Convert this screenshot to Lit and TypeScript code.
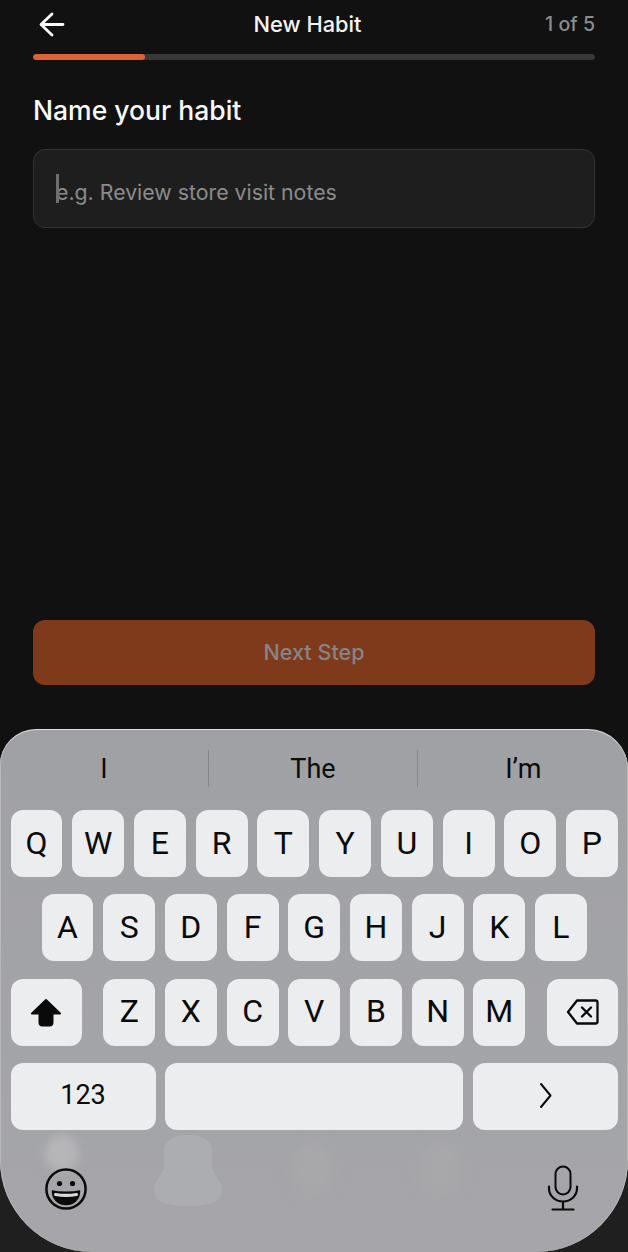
import { LitElement, html, css, svg } from "lit";
import { customElement } from "lit/decorators.js";

const row1 = ["Q","W","E","R","T","Y","U","I","O","P"];
const row2 = ["A","S","D","F","G","H","J","K","L"];
const row3 = ["Z","X","C","V","B","N","M"];

@customElement("app-root")
export class AppRoot extends LitElement {
  static styles = css`
    :host { display: flex; flex-direction: column; width: 628px; height: 1252px; background: #111111; font-family: Inter, "Liberation Sans", sans-serif; overflow: hidden; }
    .main { flex: 1; display: flex; flex-direction: column; padding: 0 33px; box-sizing: border-box; min-height: 0; }
    .header { display: flex; justify-content: space-between; align-items: center; height: 50px; flex: none; }
    .back-box { width: 37px; }
    .back { display: block; margin-left: 5px; width: 28px; height: 28px; }
    .title { color: #f5f5f5; font-size: 21.8px; font-weight: 500; padding-bottom: 2px; }
    .count { color: #8c8c8c; font-size: 19.6px; font-weight: 500; padding-bottom: 2px; }
    .track { height: 6px; margin-top: 4px; border-radius: 3px; background: #383838; overflow: hidden; flex: none; }
    .fill { height: 100%; background: #dd6337; border-radius: 3px; }
    h1 { margin: 33px 0 0; color: #fafafa; font-size: 26.5px; line-height: 35px; font-weight: 500; }
    .input { margin-top: 21px; height: 79px; box-sizing: border-box; border: 1px solid #333; border-radius: 12px; background: #1e1e1e; display: flex; align-items: center; padding: 6px 0 0 22px; color: #8c8c8c; font-size: 21.3px; position: relative; flex: none; }
    .caret { position: absolute; left: 22px; top: 24px; width: 3px; height: 29px; background: #6f6f6f; }
    .button { margin-top: auto; margin-bottom: 44px; height: 65px; border-radius: 12px; background: #7e3a1a; display: flex; align-items: center; justify-content: center; padding-bottom: 2px; box-sizing: border-box; color: #85858a; font-size: 21.6px; font-weight: 550; flex: none; }
    .kb-wrap { height: 523px; flex: none; background: linear-gradient(#111 50%, #1f1f1f 50%); }
    .kb { position: relative; height: 523px; box-sizing: border-box; background: linear-gradient(#a0a1a5, #a6a6aa); border-radius: 36px 40px 92px 92px; border-top: 1.5px solid #e0e0e2; box-shadow: inset 1px 0 0 #b8b8ba, inset -1px 0 0 #b8b8ba; overflow: hidden; padding: 0 10px 0 10.5px; }
    .blob { position: absolute; border-radius: 50%; background: #b6b6b9; filter: blur(5px); }
    .blob-1 { left: 45px; top: 405px; width: 34px; height: 36px; }
    .blob-3 { left: 292px; top: 412px; width: 42px; height: 56px; background: #a8a8ab; filter: blur(7px); }
    .blob-4 { left: 418px; top: 412px; width: 44px; height: 56px; background: #a8a8ab; filter: blur(7px); }
    .bell { position: absolute; left: 152px; top: 404px; filter: blur(0.6px); }
    .suggest { position: relative; display: grid; grid-template-columns: 208px 209px 1fr; height: 80px; margin: 0 -10.5px; align-items: start; }
    .sug { height: 37px; margin-top: 20px; display: flex; align-items: center; justify-content: center; font-size: 27px; color: #0c0c0c; font-family: Roboto, "Liberation Sans", sans-serif; border-left: 1px solid #85868a; }
    .sug:first-child { border-left: none; }
    .rows { position: relative; display: flex; flex-direction: column; gap: 17.33px; }
    .row { display: flex; gap: 9.75px; height: 67px; }
    .row2 { padding: 0 31px; }
    .letters { display: flex; gap: 9.75px; flex: 1; margin: 0 12px; }
    .key { flex: 1; min-width: 0; box-sizing: border-box; padding-bottom: 2px; display: flex; align-items: center; justify-content: center; background: #ecedef; border-radius: 12px; color: #0a0a0a; font-size: 32px; font-family: Roboto, "Liberation Sans", sans-serif; }
    .mod { flex: none; width: 71px; padding-bottom: 0; }
    .wide { flex: none; width: 145px; }
    .num { font-size: 27px; }
    .tools { position: relative; display: flex; justify-content: space-between; align-items: flex-start; padding-left: 33px; margin-top: 38px; }
    .mic { margin-right: 39px; margin-top: -3px; }
    svg { display: block; }
  `;

  private icon(w: number, h: number, body: unknown, cls = "") {
    return html`<svg class=${cls} width=${w} height=${h} viewBox="0 0 ${w} ${h}" fill="none" stroke="#0a0a0a" stroke-width="2" stroke-linecap="round" stroke-linejoin="round">${body}</svg>`;
  }

  render() {
    return html`
      <div class="main">
        <div class="header">
          <div class="back-box"><svg class="back" viewBox="0 0 28 28" fill="none" stroke="#fafafa" stroke-width="2.8" stroke-linecap="round" stroke-linejoin="round"><path d="M25 13.5H3.5M14 3 3 13.5 14 24"/></svg></div>
          <div class="title">New Habit</div>
          <div class="count">1 of 5</div>
        </div>
        <div class="track"><div class="fill" style="width:20%"></div></div>
        <h1>Name your habit</h1>
        <div class="input"><span>e.g. Review store visit notes</span><div class="caret"></div></div>
        <div class="button">Next Step</div>
      </div>
      <div class="kb-wrap">
        <div class="kb">
          <div class="blob blob-1"></div>
          <svg class="bell" width="72" height="74" viewBox="0 0 72 74"><path d="M12 18C12 6 22 1 36 1s24 5 24 17v14c0 8 10 14 10 24 0 11-10 16-34 16S2 67 2 56c0-10 10-16 10-24Z" fill="#acadb0"/></svg>
          <div class="blob blob-3"></div>
          <div class="blob blob-4"></div>
          <div class="suggest">
            <div class="sug">I</div><div class="sug">The</div><div class="sug">I’m</div>
          </div>
          <div class="rows">
            <div class="row">${row1.map(k => html`<div class="key">${k}</div>`)}</div>
            <div class="row row2">${row2.map(k => html`<div class="key">${k}</div>`)}</div>
            <div class="row">
              <div class="key mod">${this.icon(34, 29, svg`<path d="M17 2 3 15.5h7.5v9a3 3 0 0 0 3 3h7a3 3 0 0 0 3-3v-9H31Z" fill="#0a0a0a"/>`)}</div>
              <div class="letters">${row3.map(k => html`<div class="key">${k}</div>`)}</div>
              <div class="key mod">${this.icon(34, 28, svg`<path d="M11 2.5h18.5a2 2 0 0 1 2 2v19a2 2 0 0 1-2 2H11L2 14Z" stroke-width="2.3"/><path d="m16 9.5 9 9M25 9.5l-9 9" stroke-width="2.3"/>`)}</div>
            </div>
            <div class="row">
              <div class="key wide num">123</div>
              <div class="key"></div>
              <div class="key wide">${this.icon(13, 27, svg`<path d="M2 2l9.5 11.5L2 25"/>`)}</div>
            </div>
          </div>
          <div class="tools">
            ${this.icon(44, 42, svg`<circle cx="22" cy="21" r="19.6" stroke-width="2.5"/><circle cx="15.5" cy="15.5" r="2.6" fill="#0a0a0a" stroke="none"/><circle cx="28.5" cy="15.5" r="2.6" fill="#0a0a0a" stroke="none"/><path d="M8.5 23c6 1.6 21 1.6 27 0 0 8-5.5 13.5-13.5 13.5S8.5 31 8.5 23Z" fill="#0a0a0a" stroke-width="1.5"/><path d="M11.5 26.5c6 1 15 1 21 0" stroke="#d8d8d8" stroke-width="3"/>`)}
            ${this.icon(32, 46, svg`<rect x="8.5" y="1.5" width="15" height="28" rx="7.5"/><path d="M2 21.5v2a14 13 0 0 0 28 0v-2M16 36.5v7.5M5.5 44.5h21" stroke-width="2.2"/>`, "mic")}
          </div>
        </div>
      </div>
    `;
  }
}
